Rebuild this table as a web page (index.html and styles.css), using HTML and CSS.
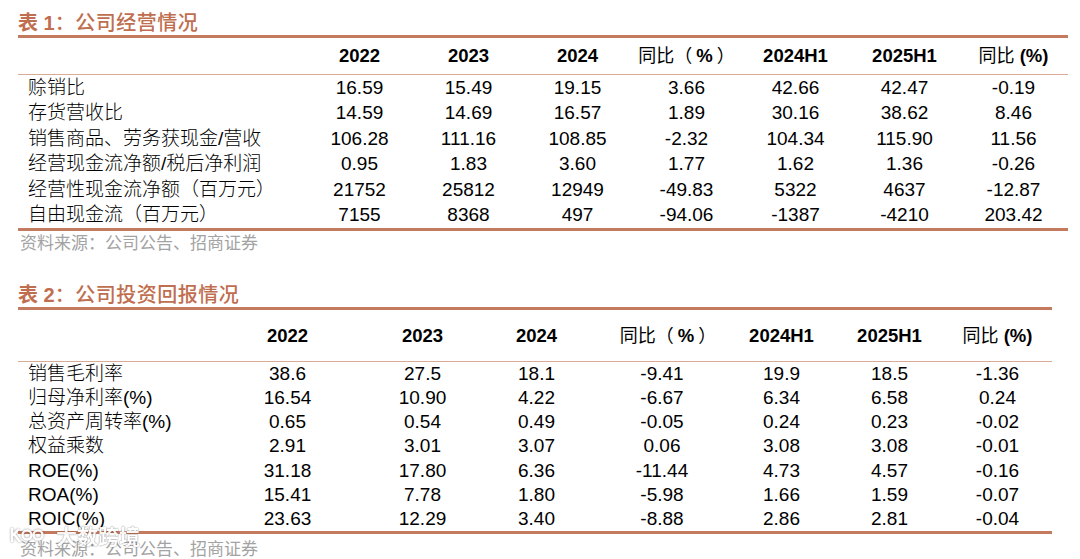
FILE: index.html
```html
<!DOCTYPE html>
<html lang="zh-CN">
<head>
<meta charset="utf-8">
<title>公司经营情况</title>
<link rel="stylesheet" href="styles.css">
</head>
<body>
<div class="page">
  <section class="block block-1">
    <h2 class="title">表 1<span class="cjk">：公司经营情况</span></h2>
    <div class="table t1">
      <div class="row head">
        <div class="label"></div>
        <div>2022</div><div>2023</div><div>2024</div>
        <div class="yoy"><span class="cjk">同比（</span><span class="pct">%</span><span class="cjk">）</span></div>
        <div>2024H1</div><div>2025H1</div>
        <div><span class="cjk">同比</span> (%)</div>
      </div>
      <div class="row"><div class="label">赊销比</div><div>16.59</div><div>15.49</div><div>19.15</div><div>3.66</div><div>42.66</div><div>42.47</div><div>-0.19</div></div>
      <div class="row"><div class="label">存货营收比</div><div>14.59</div><div>14.69</div><div>16.57</div><div>1.89</div><div>30.16</div><div>38.62</div><div>8.46</div></div>
      <div class="row"><div class="label">销售商品、劳务获现金/营收</div><div>106.28</div><div>111.16</div><div>108.85</div><div>-2.32</div><div>104.34</div><div>115.90</div><div>11.56</div></div>
      <div class="row"><div class="label">经营现金流净额/税后净利润</div><div>0.95</div><div>1.83</div><div>3.60</div><div>1.77</div><div>1.62</div><div>1.36</div><div>-0.26</div></div>
      <div class="row"><div class="label">经营性现金流净额（百万元）</div><div>21752</div><div>25812</div><div>12949</div><div>-49.83</div><div>5322</div><div>4637</div><div>-12.87</div></div>
      <div class="row"><div class="label">自由现金流（百万元）</div><div>7155</div><div>8368</div><div>497</div><div>-94.06</div><div>-1387</div><div>-4210</div><div>203.42</div></div>
    </div>
    <p class="source">资料来源：公司公告、招商证券</p>
  </section>

  <section class="block block-2">
    <h2 class="title">表 2<span class="cjk">：公司投资回报情况</span></h2>
    <div class="table t2">
      <div class="row head">
        <div class="label"></div>
        <div>2022</div><div>2023</div><div>2024</div>
        <div class="yoy shift"><span class="cjk">同比（</span><span class="pct">%</span><span class="cjk">）</span></div>
        <div>2024H1</div><div>2025H1</div>
        <div><span class="cjk">同比</span> (%)</div>
      </div>
      <div class="row"><div class="label">销售毛利率</div><div>38.6</div><div>27.5</div><div>18.1</div><div>-9.41</div><div>19.9</div><div>18.5</div><div>-1.36</div></div>
      <div class="row"><div class="label">归母净利率(%)</div><div>16.54</div><div>10.90</div><div>4.22</div><div>-6.67</div><div>6.34</div><div>6.58</div><div>0.24</div></div>
      <div class="row"><div class="label">总资产周转率(%)</div><div>0.65</div><div>0.54</div><div>0.49</div><div>-0.05</div><div>0.24</div><div>0.23</div><div>-0.02</div></div>
      <div class="row"><div class="label">权益乘数</div><div>2.91</div><div>3.01</div><div>3.07</div><div>0.06</div><div>3.08</div><div>3.08</div><div>-0.01</div></div>
      <div class="row"><div class="label">ROE(%)</div><div>31.18</div><div>17.80</div><div>6.36</div><div>-11.44</div><div>4.73</div><div>4.57</div><div>-0.16</div></div>
      <div class="row"><div class="label">ROA(%)</div><div>15.41</div><div>7.78</div><div>1.80</div><div>-5.98</div><div>1.66</div><div>1.59</div><div>-0.07</div></div>
      <div class="row"><div class="label">ROIC(%)</div><div>23.63</div><div>12.29</div><div>3.40</div><div>-8.88</div><div>2.86</div><div>2.81</div><div>-0.04</div></div>
    </div>
    <p class="source source-2">资料来源：公司公告、招商证券</p>
  </section>

  <div class="watermark" aria-hidden="true">
    <svg class="wm-logo" width="34" height="16" viewBox="0 0 34 16">
      <path d="M2 1 V15 M2 9 L9 2 M4 7 L10 15" fill="none" stroke="#fff" stroke-width="2.4"/>
      <circle cx="17" cy="8" r="4.5" fill="none" stroke="#fff" stroke-width="2.4"/>
      <circle cx="28" cy="8" r="4.5" fill="none" stroke="#fff" stroke-width="2.4"/>
    </svg>
    <span class="wm-text">大数跨境</span>
  </div>
</div>
</body>
</html>
```

FILE: styles.css
```css
html, body {
  margin: 0;
  padding: 0;
  background: #ffffff;
}

.page {
  position: relative;
  width: 1080px;
  height: 559px;
  overflow: hidden;
  font-family: "Liberation Sans", "Noto Sans CJK SC", sans-serif;
  color: #000;
}

.block {
  margin-left: 18px;
}

.block-1 {
  width: 1050px;
  padding-top: 12px;
}

.block-2 {
  width: 1034px;
  padding-top: 32px;
}

.title {
  margin: 0;
  font-size: 20px;
  line-height: 20px;
  font-weight: 700;
  color: #bf6e4f;
  padding-bottom: 2px;
  border-bottom: 3px solid #c47a5e;
}

.title .cjk {
  font-family: "Noto Sans CJK SC", sans-serif;
  font-weight: 500;
  letter-spacing: 0.5px;
}

.table {
  display: flex;
  flex-direction: column;
  border-bottom: 3px solid #c47a5e;
}

.row {
  display: grid;
  align-items: center;
  font-size: 19px;
}

.t1 .row {
  grid-template-columns: 287px repeat(7, 109px);
  height: 25.5px;
}

.t2 .row {
  grid-template-columns: 188px 163px 107px 121px 130px 109px 107px 109px;
  height: 24.15px;
}

.row > div {
  text-align: center;
  white-space: nowrap;
  line-height: 22px;
}

.row > .label {
  text-align: left;
  padding-left: 10px;
  font-weight: 300;
}

.row.head {
  font-weight: 700;
  font-size: 18.5px;
  border-bottom: 1px solid #d8ab99;
}

.t1 .row.head {
  height: 36px;
}

.t2 .row.head {
  height: 51px;
}

.row.head .cjk {
  font-weight: 400;
  font-size: 18px;
}

.row.head .pct {
  padding: 0 4px;
}

.row.head .shift {
  padding-left: 12px;
}

.source {
  margin: 0;
  font-family: "Noto Sans CJK SC", sans-serif;
  font-size: 17px;
  line-height: 21px;
  color: #a3a3a3;
  padding-left: 2px;
}

.source-2 {
  padding-top: 3px;
}

.watermark {
  position: absolute;
  left: 10px;
  top: 524px;
  display: flex;
  align-items: center;
  gap: 12px;
  opacity: 0.92;
}

.wm-logo {
  filter: drop-shadow(0 0 1px rgba(0, 0, 0, 0.45));
}

.wm-text {
  font-family: "Noto Sans CJK SC", sans-serif;
  font-weight: 700;
  font-size: 21px;
  line-height: 22px;
  color: #ffffff;
  text-shadow: 0 0 1px rgba(0, 0, 0, 0.5), 0 0 2px rgba(0, 0, 0, 0.25);
}
```
